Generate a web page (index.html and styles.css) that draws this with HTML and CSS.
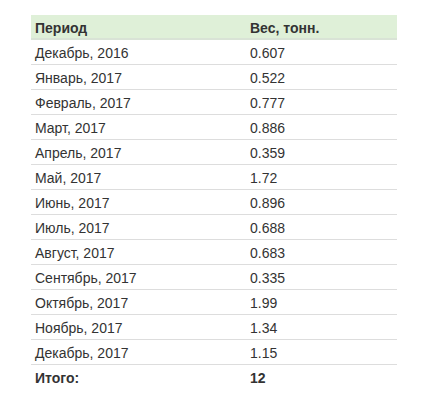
FILE: index.html
```html
<!DOCTYPE html>
<html lang="ru">
<head>
<meta charset="utf-8">
<link rel="stylesheet" href="styles.css">
</head>
<body>
<table class="data">
  <thead>
    <tr><th class="c1">Период</th><th>Вес, тонн.</th></tr>
  </thead>
  <tbody>
    <tr><td>Декабрь, 2016</td><td>0.607</td></tr>
    <tr><td>Январь, 2017</td><td>0.522</td></tr>
    <tr><td>Февраль, 2017</td><td>0.777</td></tr>
    <tr><td>Март, 2017</td><td>0.886</td></tr>
    <tr><td>Апрель, 2017</td><td>0.359</td></tr>
    <tr><td>Май, 2017</td><td>1.72</td></tr>
    <tr><td>Июнь, 2017</td><td>0.896</td></tr>
    <tr><td>Июль, 2017</td><td>0.688</td></tr>
    <tr><td>Август, 2017</td><td>0.683</td></tr>
    <tr><td>Сентябрь, 2017</td><td>0.335</td></tr>
    <tr><td>Октябрь, 2017</td><td>1.99</td></tr>
    <tr><td>Ноябрь, 2017</td><td>1.34</td></tr>
    <tr><td>Декабрь, 2017</td><td>1.15</td></tr>
    <tr class="total"><td>Итого:</td><td>12</td></tr>
  </tbody>
</table>
</body>
</html>
```
FILE: styles.css
```css
html, body {
  margin: 0;
  padding: 0;
  background: #fff;
}
body {
  font-family: "Liberation Sans", Arial, sans-serif;
  font-size: 14px;
  line-height: 17px;
  color: #333;
}
.data {
  margin: 15px 0 0 31px;
  width: 366px;
  border-collapse: collapse;
  border-spacing: 0;
}
.data th {
  background: #dff0d8;
  text-align: left;
  font-weight: bold;
  padding: 5px 4px 1px;
  border-bottom: 2px solid #d9e3d6;
  color: #333;
}
.data th.c1 {
  width: 207px;
}
.data td {
  padding: 5px 4px 2px;
  border-bottom: 1px solid #ddd;
}
.data tr.total td {
  font-weight: bold;
  border-bottom: none;
}
```
